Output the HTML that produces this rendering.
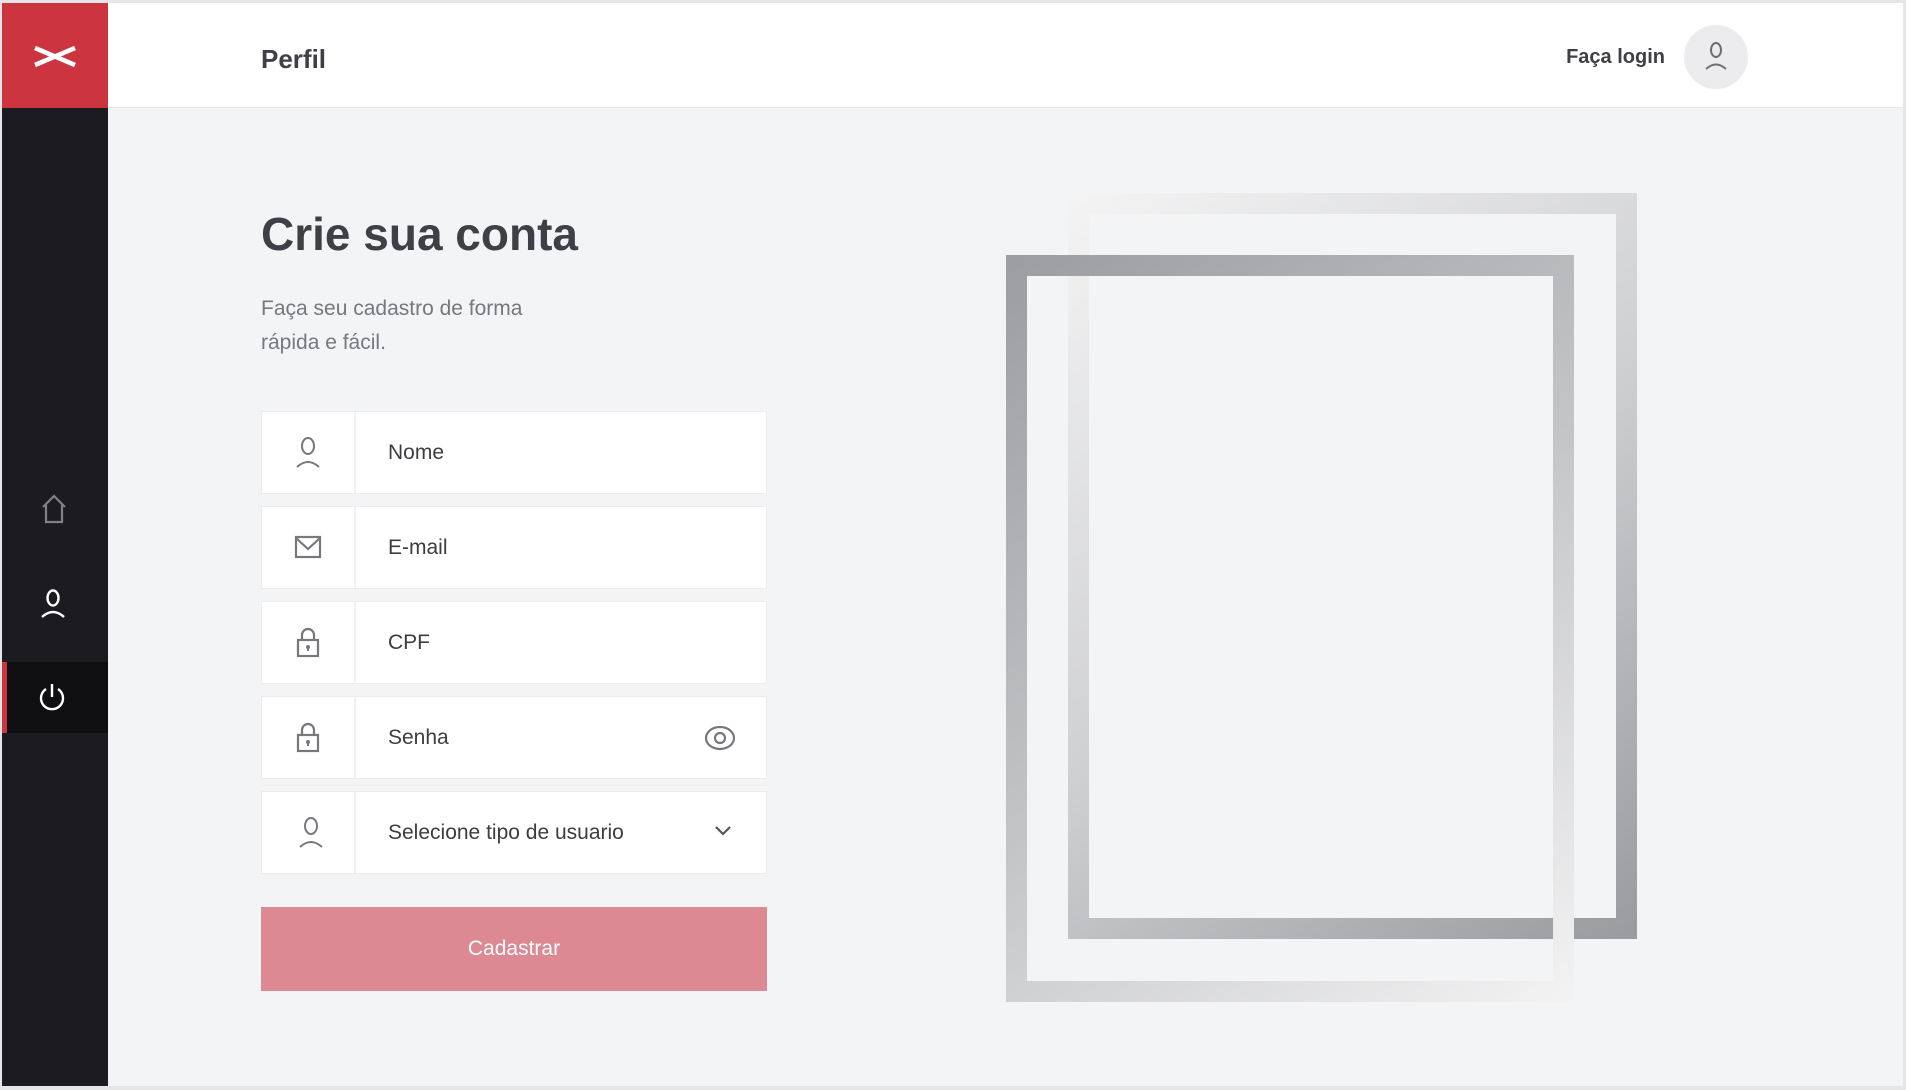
<!DOCTYPE html>
<html><head><meta charset="utf-8"><style>
*{margin:0;padding:0;box-sizing:border-box}
body{width:1906px;height:1090px;background:#e6e6e8;font-family:"Liberation Sans",sans-serif;position:relative;overflow:hidden}
#app{position:absolute;left:2px;top:3px;width:1901px;height:1083px;background:#f3f4f6}
#side{position:absolute;left:0;top:0;width:106px;height:1083px;background:#1c1c20}
#logo{position:absolute;left:0;top:0;width:106px;height:105px;background:#cc3440}
#hdr{position:absolute;left:106px;top:0;right:0;height:105px;background:#fff;border-bottom:1px solid #e8e9ec}
.t{position:absolute;white-space:nowrap}
.field{position:absolute;left:259px;width:506px;height:83px;background:#fff;border:1px solid #ececef}
.field .ic{position:absolute;left:0;top:0;width:94px;height:81px;border-right:2px solid #f0f1f3}
.field .ic svg{position:absolute;left:30px;top:24px}
.field .lb{position:absolute;left:126px;top:0;line-height:81px;font-size:21px;color:#3c3d42}
</style></head><body>
<div id="app">
<div id="side">
 <div id="logo"><svg width="106" height="105"><path d="M33 45 L73 62 M33 62 L73 45" stroke="#fff" stroke-width="4.5"/></svg></div>
 <svg style="position:absolute;left:38px;top:491px" width="28" height="30"><path d="M3 13 L14 2 L25 13 M6 11 V28 H22 V11" fill="none" stroke="#808085" stroke-width="2.2"/></svg>
 <svg style="position:absolute;left:37px;top:586px" width="28" height="32"><ellipse cx="14" cy="9" rx="5.5" ry="7.5" fill="none" stroke="#fff" stroke-width="2.4"/><path d="M3 28 Q14 18 25 28" fill="none" stroke="#fff" stroke-width="2.4"/></svg>
 <div style="position:absolute;left:0;top:659px;width:106px;height:71px;background:#0f0f12;border-left:5px solid #cc3440"></div>
 <svg style="position:absolute;left:35px;top:679px" width="30" height="32"><path d="M9 7 A11 11 0 1 0 21 7" fill="none" stroke="#fff" stroke-width="2.4"/><path d="M15 2 V15" stroke="#fff" stroke-width="2.4"/></svg>
</div>
<div id="hdr"></div>
<div class="t" style="left:259px;top:41px;font-size:26px;font-weight:bold;color:#3f4046">Perfil</div>
<div class="t" style="right:238px;top:43px;font-size:20px;font-weight:bold;color:#3f4046">Faça login</div>
<div style="position:absolute;left:1682px;top:22px;width:64px;height:64px;border-radius:50%;background:#ececee"></div>
<svg style="position:absolute;left:1700px;top:38px" width="28" height="32"><ellipse cx="14" cy="9" rx="5" ry="7" fill="none" stroke="#6c6d72" stroke-width="2"/><path d="M4 28 Q14 19 24 28" fill="none" stroke="#6c6d72" stroke-width="2"/></svg>

<div class="t" style="left:259px;top:204px;font-size:46px;font-weight:bold;color:#3f4046">Crie sua conta</div>
<div class="t" style="left:259px;top:289px;font-size:21px;line-height:34px;color:#77787d">Faça seu cadastro de forma<br>rápida e fácil.</div>

<div class="field" style="top:408px"><div class="ic"><svg width="32" height="34"><ellipse cx="16" cy="10" rx="6" ry="8" fill="none" stroke="#77787d" stroke-width="2"/><path d="M5 31 Q16 21 27 31" fill="none" stroke="#77787d" stroke-width="2"/></svg></div><div class="lb">Nome</div></div>
<div class="field" style="top:503px"><div class="ic"><svg width="32" height="34"><rect x="4" y="6" width="24" height="20" fill="none" stroke="#77787d" stroke-width="2.2"/><path d="M4 7 L16 18 L28 7" fill="none" stroke="#77787d" stroke-width="2.2"/></svg></div><div class="lb">E-mail</div></div>
<div class="field" style="top:598px"><div class="ic"><svg width="32" height="34"><path d="M10 14 V9 A6 6 0 0 1 22 9 V14" fill="none" stroke="#77787d" stroke-width="2.2"/><rect x="6" y="14" width="20" height="16" fill="none" stroke="#77787d" stroke-width="2.2"/><circle cx="16" cy="21" r="2" fill="#77787d"/><path d="M16 21 V25" stroke="#77787d" stroke-width="2"/></svg></div><div class="lb">CPF</div></div>
<div class="field" style="top:693px"><div class="ic"><svg width="32" height="34"><path d="M10 14 V9 A6 6 0 0 1 22 9 V14" fill="none" stroke="#77787d" stroke-width="2.2"/><rect x="6" y="14" width="20" height="16" fill="none" stroke="#77787d" stroke-width="2.2"/><circle cx="16" cy="21" r="2" fill="#77787d"/><path d="M16 21 V25" stroke="#77787d" stroke-width="2"/></svg></div><div class="lb">Senha</div>
 <svg style="position:absolute;left:442px;top:27px" width="32" height="28"><ellipse cx="16" cy="14" rx="14" ry="11" fill="none" stroke="#77787d" stroke-width="2.2"/><circle cx="16" cy="14" r="5" fill="none" stroke="#77787d" stroke-width="2.2"/></svg></div>
<div class="field" style="top:788px"><div class="ic"><svg width="32" height="34" style="left:33px"><ellipse cx="16" cy="10" rx="6" ry="8" fill="none" stroke="#77787d" stroke-width="2"/><path d="M5 31 Q16 21 27 31" fill="none" stroke="#77787d" stroke-width="2"/></svg></div><div class="lb">Selecione tipo de usuario</div>
 <svg style="position:absolute;left:451px;top:32px" width="20" height="14"><path d="M3 3 L10 10 L17 3" fill="none" stroke="#55565b" stroke-width="2.2"/></svg></div>

<div style="position:absolute;left:259px;top:904px;width:506px;height:84px;background:#dc8994;color:#fff;font-size:21px;text-align:center;line-height:84px">Cadastrar</div>

<svg style="position:absolute;left:0;top:0" width="1901" height="1083">
<defs>
<linearGradient id="gb" x1="1066" y1="190" x2="1634" y2="935" gradientUnits="userSpaceOnUse"><stop offset="0" stop-color="#f4f4f5"/><stop offset="0.5" stop-color="#cfd0d2"/><stop offset="1" stop-color="#9a9b9f"/></linearGradient>
<linearGradient id="gf" x1="1004" y1="252" x2="1572" y2="998" gradientUnits="userSpaceOnUse"><stop offset="0" stop-color="#9c9da1"/><stop offset="0.5" stop-color="#c3c4c6"/><stop offset="1" stop-color="#f3f3f4"/></linearGradient>
</defs>
<rect x="1076.5" y="200.5" width="548" height="725" fill="none" stroke="url(#gb)" stroke-width="21"/>
<rect x="1014.5" y="262.5" width="547" height="726" fill="none" stroke="url(#gf)" stroke-width="21"/>
</svg>
</div>
</body></html>
